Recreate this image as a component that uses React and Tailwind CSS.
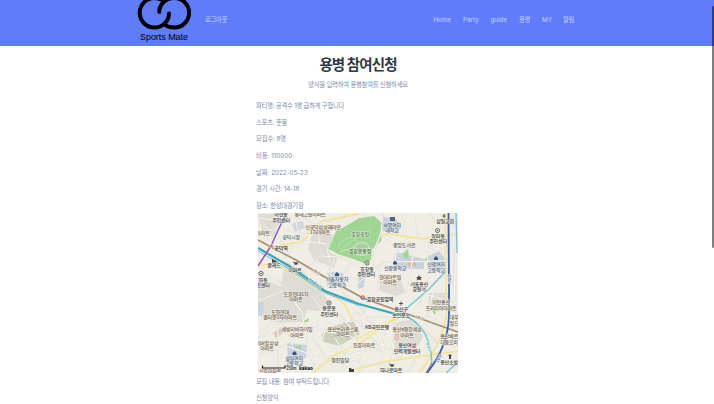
const KR = "font-['Inter','Noto_Sans_CJK_KR',sans-serif]";

const rows = [
  ["파티명: 공격수 1명 급하게 구합니다", "tracking-[-0.22px]"],
  ["스포츠: 풋볼", "tracking-[-0.2px]"],
  ["모집수: 8명", "tracking-[-0.1px]"],
  ["비용: 110000", "tracking-normal"],
  ["날짜: 2022-05-23", "tracking-normal"],
  ["경기 시간: 14-18", "tracking-[-0.1px]"],
  ["장소: 한성대경기장", "tracking-[-0.25px]"],
];

// x (centre), y (baseline), text, colour
const labels = [
  [23, 3, "아현동", "#444"], [23, 8.5, "주민센터", "#444"],
  [52, 3, "롯데고원아파트", "#75644f"],
  [65, 15.5, "신공덕삼성래미안", "#75644f"], [62, 21, "1차아파트", "#75644f"],
  [33, 25.5, "공덕시장", "#3c8074"], [23, 36.5, "공덕역", "#333"],
  [5, 21.5, "아파트", "#75644f"], [16, 54, "글래드", "#444"], [37, 58.5, "이마트", "#444"],
  [5, 68.5, "화동", "#444"], [5, 74, "민센터", "#444"],
  [79, 68, "서울자동차", "#4d6583"], [79, 73.5, "고등학교", "#4d6583"],
  [102, 22.5, "효창공원", "#568252"], [102, 39.5, "효창운동장", "#466f45"],
  [134, 13.5, "숙명여자", "#4d6583"], [134, 19, "대학교", "#4d6583"],
  [146, 33.5, "중앙도서관", "#666"], [187, 10, "삼일교회", "#444"],
  [180, 24.5, "청파동", "#444"], [180, 30, "주민센터", "#444"],
  [137, 56.5, "신광중학교", "#4d6583"], [109, 57.5, "효창동", "#444"],
  [108, 62.8, "주민센터", "#444"], [132, 65.8, "현대아트빌", "#75644f"],
  [132, 71, "아파트", "#75644f"], [178, 53, "신광여자", "#4d6583"],
  [178, 58.5, "고등학교", "#4d6583"], [161, 72.5, "서울용산", "#444"],
  [161, 78, "경찰서", "#444"],
  [38, 82.5, "도화현대1차", "#75644f"], [38, 88, "아파트", "#75644f"],
  [22, 100.5, "도화현대", "#75644f"], [22, 106, "홈타운2차아파트", "#75644f"],
  [71, 97, "용문동", "#444"], [71, 102.5, "주민센터", "#444"],
  [39, 118, "세방리버하이빌", "#75644f"], [39, 123.5, "아파트", "#75644f"],
  [9, 131.5, "리버힐삼성", "#75644f"], [9, 137, "아파트", "#75644f"],
  [36, 146.5, "성심여자", "#4d6583"], [36, 151.6, "고등학교", "#4d6583"],
  [85, 117.5, "용산브라운스톤", "#75644f"], [85, 123, "아파트", "#75644f"],
  [82, 149, "청진빌딩", "#555"], [106, 134, "진효아파트", "#75644f"],
  [122, 87.5, "효창공원앞역", "#333"], [143, 98, "용산구", "#444"],
  [143, 103.5, "보건분소", "#444"], [119, 116, "KB국민은행", "#444"],
  [149, 118, "용산e편한세상", "#75644f"], [149, 123.5, "아파트", "#75644f"],
  [149, 134, "용산여성", "#444"], [149, 139.5, "인력개발센터", "#444"],
  [133, 159, "하나로마트", "#444"], [183, 91, "이안용산", "#75644f"],
  [183, 96.5, "프리미어아파트", "#75644f"], [196, 106, "대우", "#75644f"], [196, 111.5, "월드", "#75644f"],
  [191, 125, "용산베르", "#75644f"], [191, 130.5, "디움오피", "#75644f"],
  [191, 150.5, "용산소방", "#444"], [12, 159.5, "신효아파트", "#75644f"],
];

const streets = [
  "M0 10L12 17L22 14L42 22L50 18M43 0L38 12L46 28L68 31L72 50M58 8L62 30M27 45L34 33L47 32M6 62L20 68L32 79L42 98",
  "M40 0L52 9L80 7L90 0M125 0L123 20L115 40L117 60M125 28L160 38L190 34M145 0L147 22L155 42L150 78",
  "M100 70L126 49L190 48M158 3L160 24M168 26L171 60L160 95M120 79L122 56M195 0L197 100M139 36L137 50",
  "M0 88L25 78L44 98L48 126L58 159M0 118L32 110L98 125M0 142L28 133L55 142L100 149M20 100L20 159",
  "M55 84L64 98L82 101L98 122L104 159M61 105L55 126L76 155M98 99L126 118L122 159M108 94L102 111L122 139",
  "M104 104L138 104L132 152M112 125L145 146M98 141L129 130M150 103L180 130L200 133M157 148L150 159M175 79L168 112M170 82L200 91",
  "M0 125L10 120L14 103M28 111L35 136M64 128L69 110L100 108M70 135L99 141M77 125L89 144L85 159M84 79L105 96",
  "M77 45L70 59L90 78M49 55L62 43L82 44L101 54M90 52L86 62L101 67M22 23L28 38M0 5L24 8M107 0L105 5M171 0L184 15L200 9",
];

const markers = [
  [3, 60.5], [109, 50], [71, 90], [179.5, 17.5],
];
const schools = [[79, 61], [137, 49.5], [178, 45], [36.5, 140]];

function MapView() {
  return (
    <svg viewBox="0 0 200 160" className="block h-[160px] w-[200px] font-['Noto_Sans_CJK_KR',sans-serif]">
      <rect width="200" height="160" fill="#f0ede5" />
      <g fill="#deddd5">
        <path d="M54 22L66 17L77 24L71 39L80 43L76 55L56 47L50 35Z" />
        <path d="M27 48L45 58L64 79L70 88L64 98L49 97L45 109L18 110L0 102V88L22 80Z" />
        <path d="M0 65L13 69L31 78L24 88L0 85Z" />
        <path d="M119 68L143 68L148 79L138 83L120 77Z" />
        <path d="M135 110L155 106L165 124L154 143L137 137Z" />
        <path d="M170 80L190 80L188 97L171 96Z" />
        <path d="M0 1H22L17 25L4 18Z" />
      </g>
      <path d="M70 115L95 107L102 121L81 133L66 129L63 122Z" fill="#cdd0ba" />
      <g fill="#c9d3df">
        <path d="M124 4L137 5L143 12L140 20L125 18Z" />
        <path d="M138 39L166 46L166 56L144 56L135 51Z" />
        <path d="M169 44L181 38L188 47L183 58L171 54Z" />
        <path d="M29 130L49 132L48 145L30 150Z" />
        <path d="M70 59L85 60L88 73L69 73Z" /><path d="M0 89L6 90L5 101L0 103Z" />
        <path d="M100 59L107 61L106 74L100 76Z" />
      </g>
      <path d="M34 11L45 8L47 15L37 19Z" fill="#d5d5df" />
      <path d="M149 47L157 47L158 53L151 54Z" fill="#d6b9a5" />
      <path d="M135 119L141 119L141 127L135 127Z" fill="#dfc5bd" />
      <path d="M15 120L23 115L26 119L18 125Z" fill="#dfc5bd" />
      <path d="M101 5L88 13L78 18L71 36L80 41L98 47L108 51L113 47L114 36L123 28L125 11L116 3Z" fill="#a0d694" />
      <g fill="#a0d694">
        <path d="M144 41L150 36L151 44L147 46Z" /><path d="M166 47L171 42L169 49Z" />
        <path d="M36 134L43 132L43 137Z" /><path d="M44 109L51 105L50 109Z" />
        <path d="M75 122L79 117L83 120L78 124Z" /><path d="M174 98L179 95L177 102Z" />
      </g>
      <g fill="none" stroke="#c3e2b8" strokeWidth="0.8">
        <ellipse cx="90" cy="31" rx="10" ry="5.5" transform="rotate(-25 90 31)" />
        <path d="M84 35L98 26M82 39L100 33" />
      </g>
      <ellipse cx="104" cy="36" rx="7.5" ry="6.5" fill="#a9cfa0" stroke="#d3e4cb" strokeWidth="1.2" />
      <g fill="none" strokeLinejoin="round">
        {streets.map((d) => (
          <path key={d} d={d} stroke="#d3d0ca" strokeWidth="1.7" />
        ))}
        {streets.map((d) => (
          <path key={d} d={d} stroke="#fdfdfb" strokeWidth="0.9" />
        ))}
        <g stroke="#f2e59c" strokeWidth="1.9">
          <path d="M13 34L41 29Q49 28 50 19L65 8L101 1M123 23Q130 19 143 23L165 26L201 21M187 0L188 80Q194 118 161 160" />
          <path d="M0 51L20 53L35 59L55 73L75 83Q86 88 89 96L95 108M98 156L131 148L201 138M98 126L145 103M55 160L75 143L101 131L138 104" />
        </g>
        <path d="M0 35L31 53L67 78L101 91L141 102" stroke="#36a7b9" strokeWidth="2.2" />
        <path d="M0 38L31 56L67 80L101 92.5" stroke="#6fa6dc" strokeWidth="0.9" />
        <path d="M0 27L13 34L38 47L65 63L105 85L141 98L200 119" stroke="#a38c6a" strokeWidth="1.5" />
        <path d="M141 102Q155 104 163 115Q173 127 174 150M141 102L171 76L188 58" stroke="#6bc7d0" strokeWidth="1.3" />
        <path d="M28 0L13 33L0 53" stroke="#8956c9" strokeWidth="1.5" />
        <path d="M190.5 0L191 79L191 103Q190 134 169 160" stroke="#3c5bad" strokeWidth="1.8" />
        <path d="M174 150L168 160" stroke="#777" strokeWidth="1.2" />
        <path d="M198 0L199 40M200 149L188 160" stroke="#72bce2" strokeWidth="1.2" />
      </g>
      <g fontSize="3.5" fontWeight="700" textAnchor="middle" stroke="#f7f5ef" strokeWidth="0.6" paintOrder="stroke">
        <text transform="translate(56 71.5) rotate(36)" fill="#278eb0">경의중앙선</text>
        <text transform="translate(57 60) rotate(31)" fill="#927b58">6호선</text>
        <text transform="translate(161 106) rotate(20)" fill="#927b58">6호선</text>
        <text transform="translate(169 134) rotate(72)" fill="#58bfd2">경의선</text>
        <text transform="translate(190 66) rotate(90)" fill="#4b69b0">경부선</text>
        <text transform="translate(182 146) rotate(-60)" fill="#4b69b0">1호선</text>
      </g>
      <g fontSize="5.1" fontWeight="500" letterSpacing="-0.25" textAnchor="middle" stroke="#f7f5ef" strokeWidth="0.9" strokeOpacity="0.8" paintOrder="stroke">
        {labels.map(([x, y, text, color]) => (
          <text key={`${x}-${y}`} x={x} y={y} fill={color}>{text}</text>
        ))}
      </g>
      {markers.map(([x, y]) => (
        <g key={`${x}-${y}`}>
          <circle cx={x} cy={y} r="2.1" fill="#fff" stroke="#444" strokeWidth="0.8" />
          <circle cx={x} cy={y} r="0.8" fill="#444" />
        </g>
      ))}
      {schools.map(([x, y]) => (
        <path key={x} d={`M${x - 2} ${y + 2}V${y}L${x} ${y - 2}L${x + 2} ${y}V${y + 2}Z`} fill="#365477" />
      ))}
      <path d="M132 4h5v4h-5z" fill="#4d6583" />
      <path d="M161 62l1 2h2l-1.5 1.5l1 2l-2.5-1l-2.5 1l1-2l-1.5-1.5h2zM192 141l2 2h-1v3h-2v-3h-1zM91 155h2l.5 1h2.500v3h-5zM14 46h1.500v1.500h3v2h-4.500z" fill="#444" />
      <path d="M35 49h1l.7 2.500h2.500l.6-2h-3.200zM131 151h1l.7 2.500h2.500l.6-2h-3.200z" fill="#444" stroke="#444" strokeWidth="0.4" />
      <path d="M141 90.5h4M143 88.500v4M186 1v4M184.500 3h3" fill="none" stroke="#444" strokeWidth="0.9" />
      <circle cx="13.5" cy="33" r="1.8" fill="#ed6757" stroke="#fff" strokeWidth="0.5" />
      <path d="M102.500 84.500a2.200 2.200 0 0 1 4.400 0z" fill="#e8554d" />
      <path d="M102.500 84.500a2.200 2.200 0 0 0 4.400 0z" fill="#3c6fc4" />
      <circle cx="104.7" cy="84.5" r="0.9" fill="#f5d75a" />
      <path d="M4.500 152.500V155H27V152.500" fill="none" stroke="#222" strokeWidth="1.2" />
      <text x="28.5" y="156.8" fontSize="4.5" fontWeight="700" fill="#333" textLength="10" lengthAdjust="spacingAndGlyphs">250m</text>
      <text x="41" y="156.8" fontSize="4.8" fontWeight="900" fill="#222" textLength="14" lengthAdjust="spacingAndGlyphs">kakao</text>
    </svg>
  );
}

function Logo() {
  return (
    <div className="flex w-[54px] shrink-0 flex-col items-center">
      <svg viewBox="137 0 54 31" className="block h-[31px] w-[54px] overflow-visible" fill="none" stroke="#000" strokeWidth="4" strokeLinecap="round">
        <path d="M169 13.500C169 21 162.500 27.600 154.500 27.600A14.800 14.800 0 0 1 154.500 -2Q160 -2 164 1" />
        <path d="M159.300 12C159.300 4 166 -2 174.300 -2A14.800 14.800 0 0 1 174.300 27.600Q168.500 27.600 164.500 24.500" />
      </svg>
      <span className="mt-[1px] whitespace-nowrap font-['Liberation_Sans',sans-serif] text-[9px] leading-[10px] tracking-[-0.05px] text-black">Sports Mate</span>
    </div>
  );
}

export default function App() {
  return (
    <div className={`relative h-[404px] w-[714px] overflow-hidden bg-white text-[6.3px] ${KR}`}>
      <header className="flex h-[45.5px] items-start whitespace-nowrap bg-[#5f7dfb] pl-[137px] text-[#c5d0ff]">
        <Logo />
        <a className="ml-[14px] mt-[14.5px] leading-[10px] tracking-[-0.25px]">로그아웃</a>
        <nav className="ml-auto mr-[140px] mt-[14.5px] flex gap-[12px] leading-[10px]">
          <a className="w-[17.5px]">Home</a>
          <a className="w-[15.5px]">Party</a>
          <a className="w-[16.5px]">guide</a>
          <a className="w-[11px] tracking-[-0.2px]">용병</a>
          <a className="w-[9px]">MY</a>
          <a className="w-[11px] tracking-[-0.2px]">알림</a>
        </nav>
      </header>
      <main className="ml-[256px] w-[204px] text-[#7d8ba9]">
        <h1 className="mt-[9.5px] text-center text-[14.5px] font-bold leading-[20px] tracking-[-0.9px] text-[#2d3748]">용병 참여신청</h1>
        <p className="mt-[5px] text-center leading-[10px] tracking-[-0.2px]">양식을 입력하여 용병참여를 신청하세요</p>
        <div className="mt-[8px] flex flex-col">
          {rows.map(([text, tracking]) => (
            <p key={text} className={`h-[16.7px] whitespace-nowrap leading-[16.7px] ${tracking}`}>{text}</p>
          ))}
        </div>
        <div className="-mt-[1.6px] ml-[2px]">
          <MapView />
        </div>
        <p className="mt-[0.4px] h-[16.7px] leading-[16.7px] tracking-[-0.22px]">모집 내용: 참여 부탁드립니다</p>
        <p className="h-[16.7px] leading-[16.7px] tracking-[-0.22px]">신청양식</p>
      </main>
      <div className="absolute right-0 top-[6px] h-[242px] w-[2px] rounded-full bg-black/50" />
    </div>
  );
}
